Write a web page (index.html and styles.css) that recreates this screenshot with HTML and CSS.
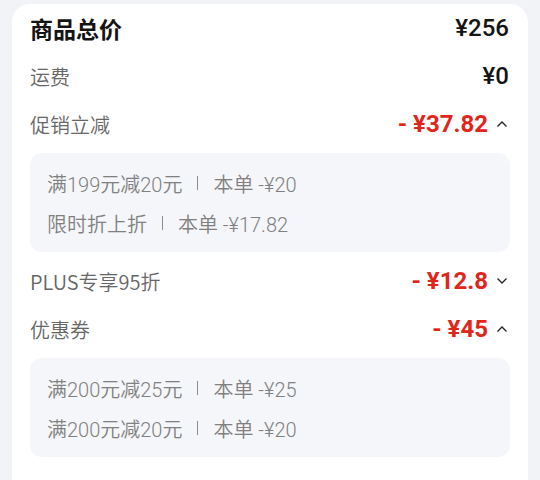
FILE: index.html
```html
<!DOCTYPE html>
<html lang="zh">
<head>
<meta charset="utf-8">
<link rel="stylesheet" href="styles.css">
</head>
<body>
<div class="card">
  <div class="row title-row">
    <span class="title">商品总价</span>
    <span class="value">¥256</span>
  </div>
  <div class="row">
    <span class="label">运费</span>
    <span class="value">¥0</span>
  </div>
  <div class="row">
    <span class="label">促销立减</span>
    <span class="right">
      <span class="amount">- ¥37.82</span>
      <svg class="chev" viewBox="0 0 12 8" width="12" height="8"><path d="M1.5 6.5 L6 2 L10.5 6.5" fill="none" stroke="#222" stroke-width="1.3"/></svg>
    </span>
  </div>
  <div class="panel">
    <div class="line"><span>满199元减20元</span><i class="sep"></i><span>本单 -¥20</span></div>
    <div class="line"><span>限时折上折</span><i class="sep"></i><span>本单 -¥17.82</span></div>
  </div>
  <div class="row">
    <span class="label">PLUS专享95折</span>
    <span class="right">
      <span class="amount">- ¥12.8</span>
      <svg class="chev" viewBox="0 0 12 8" width="12" height="8"><path d="M1.5 1.5 L6 6 L10.5 1.5" fill="none" stroke="#222" stroke-width="1.3"/></svg>
    </span>
  </div>
  <div class="row">
    <span class="label">优惠券</span>
    <span class="right">
      <span class="amount">- ¥45</span>
      <svg class="chev" viewBox="0 0 12 8" width="12" height="8"><path d="M1.5 6.5 L6 2 L10.5 6.5" fill="none" stroke="#222" stroke-width="1.3"/></svg>
    </span>
  </div>
  <div class="panel">
    <div class="line"><span>满200元减25元</span><i class="sep"></i><span>本单 -¥25</span></div>
    <div class="line"><span>满200元减20元</span><i class="sep"></i><span>本单 -¥20</span></div>
  </div>
</div>
</body>
</html>
```
FILE: styles.css
```css
html, body {
  margin: 0;
  padding: 0;
  background: #f2f3f7;
}
body {
  font-family: "Noto Sans CJK SC", "Noto Sans", sans-serif;
  width: 540px;
  height: 480px;
  overflow: hidden;
}
.card {
  margin: 4px 12px 0;
  background: #ffffff;
  border-radius: 18px;
  padding: 0 18px 40px;
}
.row {
  height: 48px;
  display: flex;
  align-items: center;
  justify-content: space-between;
}
.title {
  font-size: 23px;
  font-weight: 700;
  color: #141414;
}
.label {
  font-size: 20px;
  font-weight: 350;
  color: #666666;
}
.value {
  font-family: Roboto, "Noto Sans", sans-serif;
  font-size: 24px;
  font-weight: 500;
  color: #141414;
  margin-right: 1px;
}
.right {
  display: flex;
  align-items: center;
}
.amount {
  font-family: Roboto, "Noto Sans", sans-serif;
  font-size: 24px;
  font-weight: 700;
  color: #e1251b;
}
.chev {
  margin-left: 8px;
  margin-right: 2px;
}
.panel {
  margin: 5px 0;
  background: #f5f6f9;
  border-radius: 12px;
  padding: 10px 17px 9px;
}
.line {
  height: 40px;
  display: flex;
  align-items: center;
  font-family: Roboto, "Noto Sans CJK SC", sans-serif;
  font-size: 20px;
  font-weight: 350;
  color: #808080;
}
.sep {
  display: inline-block;
  width: 1px;
  height: 14px;
  background: #8c8c8c;
  margin: 0 15px;
}
```
